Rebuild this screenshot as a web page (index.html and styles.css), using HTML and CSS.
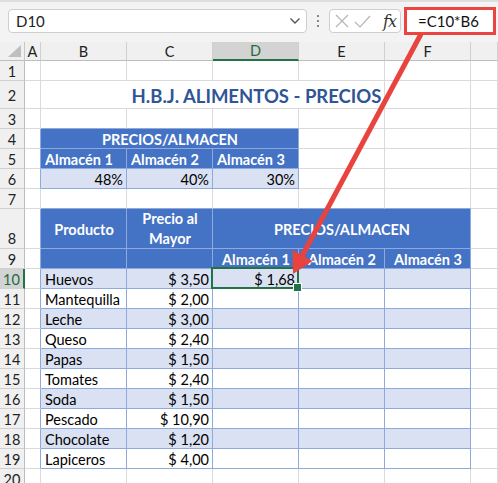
FILE: index.html
```html
<!DOCTYPE html>
<html lang="es">
<head>
<meta charset="utf-8">
<title>H.B.J. Alimentos - Precios</title>
<link rel="stylesheet" href="styles.css">
</head>
<body>
<div class="app">
  <div class="fbar">
    <div class="namebox">
      <span>D10</span>
      <svg class="chev" width="12" height="8" viewBox="0 0 12 8"><path d="M1.5 1.5 L6 6 L10.5 1.5" fill="none" stroke="#555" stroke-width="1.4"/></svg>
    </div>
    <div class="dots"><i></i><i></i><i></i></div>
    <div class="fxbox">
      <svg class="ico" width="14" height="14" viewBox="0 0 14 14"><path d="M1 1 L13 13 M13 1 L1 13" stroke="#b5b5b5" stroke-width="1.2" fill="none"/></svg>
      <svg class="ico" width="17" height="13" viewBox="0 0 17 13"><path d="M1 7 L6 12 L16 1" stroke="#b5b5b5" stroke-width="1.2" fill="none"/></svg>
      <span class="fx">fx</span>
    </div>
    <div class="formula"><span>=C10*B6</span></div>
  </div>

  <div class="sheet">
    <!-- column header -->
    <div class="corner"><svg width="16" height="14" viewBox="0 0 16 14"><path d="M15 1 L15 13 L2 13 Z" fill="#bfbfbf"/></svg></div>
    <div class="ch">A</div><div class="ch">B</div><div class="ch">C</div><div class="ch sel">D</div><div class="ch">E</div><div class="ch">F</div><div class="ch"></div>

    <!-- 1 -->
    <div class="rh">1</div><div class="c"></div><div class="c"></div><div class="c"></div><div class="c"></div><div class="c"></div><div class="c"></div><div class="c"></div>
    <!-- 2 -->
    <div class="rh">2</div><div class="c"></div><div class="c title">H.B.J. ALIMENTOS - PRECIOS</div><div class="c"></div><div class="c"></div>
    <!-- 3 -->
    <div class="rh">3</div><div class="c"></div><div class="c bb"></div><div class="c bb"></div><div class="c bb"></div><div class="c"></div><div class="c"></div><div class="c"></div>
    <!-- 4 -->
    <div class="rh">4</div><div class="c br"></div><div class="c t hd ctr span3">PRECIOS/ALMACEN</div><div class="c"></div><div class="c"></div><div class="c"></div>
    <!-- 5 -->
    <div class="rh">5</div><div class="c br"></div><div class="c t hd">Almacén 1</div><div class="c t hd">Almacén 2</div><div class="c t hd">Almacén 3</div><div class="c"></div><div class="c"></div><div class="c"></div>
    <!-- 6 -->
    <div class="rh">6</div><div class="c br"></div><div class="c t lt r">48%</div><div class="c t lt r">40%</div><div class="c t lt r">30%</div><div class="c"></div><div class="c"></div><div class="c"></div>
    <!-- 7 -->
    <div class="rh">7</div><div class="c"></div><div class="c bb"></div><div class="c bb"></div><div class="c bb"></div><div class="c bb"></div><div class="c bb"></div><div class="c"></div>
    <!-- 8 -->
    <div class="rh bottom">8</div><div class="c br"></div><div class="c t hd ctr mid">Producto</div><div class="c t hd ctr mid wrap">Precio al<br>Mayor</div><div class="c t hd ctr mid span3">PRECIOS/ALMACEN</div><div class="c"></div>
    <!-- 9 -->
    <div class="rh">9</div><div class="c br"></div><div class="c t hd"></div><div class="c t hd"></div><div class="c t hd ctr">Almacén 1</div><div class="c t hd ctr">Almacén 2</div><div class="c t hd ctr">Almacén 3</div><div class="c"></div>
    <!-- 10 -->
    <div class="rh selr">10</div><div class="c br"></div><div class="c t lt">Huevos</div><div class="c t lt r">$ 3,50</div><div class="c t lt r active">$ 1,68</div><div class="c t lt"></div><div class="c t lt"></div><div class="c"></div>
    <!-- 11 -->
    <div class="rh">11</div><div class="c br"></div><div class="c t">Mantequilla</div><div class="c t r">$ 2,00</div><div class="c t"></div><div class="c t"></div><div class="c t"></div><div class="c"></div>
    <!-- 12 -->
    <div class="rh">12</div><div class="c br"></div><div class="c t lt">Leche</div><div class="c t lt r">$ 3,00</div><div class="c t lt"></div><div class="c t lt"></div><div class="c t lt"></div><div class="c"></div>
    <!-- 13 -->
    <div class="rh">13</div><div class="c br"></div><div class="c t">Queso</div><div class="c t r">$ 2,40</div><div class="c t"></div><div class="c t"></div><div class="c t"></div><div class="c"></div>
    <!-- 14 -->
    <div class="rh">14</div><div class="c br"></div><div class="c t lt">Papas</div><div class="c t lt r">$ 1,50</div><div class="c t lt"></div><div class="c t lt"></div><div class="c t lt"></div><div class="c"></div>
    <!-- 15 -->
    <div class="rh">15</div><div class="c br"></div><div class="c t">Tomates</div><div class="c t r">$ 2,40</div><div class="c t"></div><div class="c t"></div><div class="c t"></div><div class="c"></div>
    <!-- 16 -->
    <div class="rh">16</div><div class="c br"></div><div class="c t lt">Soda</div><div class="c t lt r">$ 1,50</div><div class="c t lt"></div><div class="c t lt"></div><div class="c t lt"></div><div class="c"></div>
    <!-- 17 -->
    <div class="rh">17</div><div class="c br"></div><div class="c t">Pescado</div><div class="c t r">$ 10,90</div><div class="c t"></div><div class="c t"></div><div class="c t"></div><div class="c"></div>
    <!-- 18 -->
    <div class="rh">18</div><div class="c br"></div><div class="c t lt">Chocolate</div><div class="c t lt r">$ 1,20</div><div class="c t lt"></div><div class="c t lt"></div><div class="c t lt"></div><div class="c"></div>
    <!-- 19 -->
    <div class="rh">19</div><div class="c br"></div><div class="c t">Lapiceros</div><div class="c t r">$ 4,00</div><div class="c t"></div><div class="c t"></div><div class="c t"></div><div class="c"></div>
    <!-- 20 -->
    <div class="rh">20</div><div class="c"></div><div class="c"></div><div class="c"></div><div class="c"></div><div class="c"></div><div class="c"></div><div class="c"></div>
  </div>

  <svg class="arrow" width="498" height="483" viewBox="0 0 498 483">
    <line x1="421" y1="34" x2="301" y2="258" stroke="#e9433f" stroke-width="5" stroke-linecap="butt"/>
    <polygon points="293,274 292.5,250 312.5,261" fill="#e9433f"/>
  </svg>
</div>
</body>
</html>
```

FILE: styles.css
```css
* { box-sizing: border-box; }

html, body {
  margin: 0;
  padding: 0;
  background: #ffffff;
}

body {
  font-family: Lato, "Open Sans", "Liberation Sans", sans-serif;
  overflow: hidden;
}

.app {
  position: relative;
  width: 498px;
  height: 483px;
  overflow: hidden;
}

/* ---------- formula bar ---------- */
.fbar {
  height: 42px;
  display: flex;
  align-items: center;
  padding: 0 0 2px 8px;
  background: #f3f3f3;
  border-top: 2px solid #dedede;
}

.namebox {
  width: 299px;
  height: 24px;
  background: #fff;
  border: 1px solid #cfcfcf;
  border-radius: 4px;
  display: flex;
  align-items: center;
  justify-content: space-between;
  padding: 0 5px 0 7px;
  font-size: 15px;
  color: #222;
}

.dots {
  width: 22px;
  display: flex;
  flex-direction: column;
  align-items: center;
  gap: 3px;
}

.dots i {
  display: block;
  width: 2px;
  height: 2px;
  background: #888;
}

.fxbox {
  width: 72px;
  height: 24px;
  background: #fff;
  border: 1px solid #cfcfcf;
  border-radius: 4px;
  display: flex;
  align-items: center;
  padding: 0 4px 0 5px;
  gap: 5px;
}

.fx {
  margin-left: auto;
  font-family: "DejaVu Serif", "Liberation Serif", serif;
  font-style: italic;
  font-size: 16px;
  color: #333;
  letter-spacing: -1px;
}

.formula {
  margin-left: 3px;
  width: 92px;
  height: 28px;
  background: #fff;
  border: 3px solid #ea4540;
  display: flex;
  align-items: center;
  padding-left: 11px;
  font-size: 15px;
  color: #111;
}

/* ---------- sheet grid ---------- */
.sheet {
  display: grid;
  grid-template-columns: 25px 16px 86px 86px 86px 86px 86px 1fr;
  grid-template-rows: 19px 20px 28px 20px 20px 20px 20px 20px 40px repeat(12, 20px);
  font-size: 14.5px;
  color: #000;
}

.corner {
  background: #f0f0f0;
  border-right: 1px solid #c6c6c6;
  border-bottom: 1px solid #bdbdbd;
  display: flex;
  align-items: flex-end;
  justify-content: flex-end;
  padding: 0 2px 2px 0;
}

.ch {
  background: #f0f0f0;
  border-right: 1px solid #d0d0d0;
  border-bottom: 1px solid #bdbdbd;
  display: flex;
  align-items: center;
  justify-content: center;
  color: #222;
}

.ch.sel {
  background: #d3d3d3;
  color: #1d6b3f;
  border-bottom: 2px solid #217346;
}

.rh {
  background: #f0f0f0;
  border-right: 1px solid #bdbdbd;
  border-bottom: 1px solid #d0d0d0;
  display: flex;
  align-items: center;
  justify-content: center;
  padding-top: 1px;
  color: #222;
}

.rh.bottom {
  align-items: flex-end;
  padding-bottom: 1px;
}

.rh.selr {
  background: #d3d3d3;
  color: #1d6b3f;
  border-right: 2px solid #217346;
}

.c {
  border-right: 1px solid #dadada;
  border-bottom: 1px solid #dadada;
  display: flex;
  align-items: center;
  padding: 1px 3px 0 4px;
  white-space: nowrap;
  overflow: hidden;
}

.c.title {
  grid-column: span 4;
  justify-content: center;
  align-items: flex-end;
  padding: 0 0 1px 88px;
  font-size: 18.5px;
  font-weight: 700;
  color: #2f5597;
}

.span3 { grid-column: span 3; }

.c.bb { border-bottom-color: #8ea9db; }
.c.br { border-right-color: #8ea9db; }

.c.t {
  border-right-color: #8ea9db;
  border-bottom-color: #8ea9db;
}

.c.hd {
  background: #4472c4;
  color: #fff;
  font-weight: 700;
}

.c.lt { background: #d9e1f2; }

.c.r { justify-content: flex-end; }
.c.ctr { justify-content: center; text-align: center; }

.c.wrap {
  white-space: normal;
  line-height: 20px;
}

.c.active {
  position: relative;
  overflow: visible;
}

.c.active::before {
  content: "";
  position: absolute;
  left: -2px;
  top: -2px;
  right: -1px;
  bottom: -1px;
  border: 2px solid #217346;
}

.c.active::after {
  content: "";
  position: absolute;
  right: -4px;
  bottom: -4px;
  width: 7px;
  height: 7px;
  background: #217346;
  border: 1px solid #fff;
}

/* ---------- annotation ---------- */
.arrow {
  position: absolute;
  left: 0;
  top: 0;
  pointer-events: none;
}
```
